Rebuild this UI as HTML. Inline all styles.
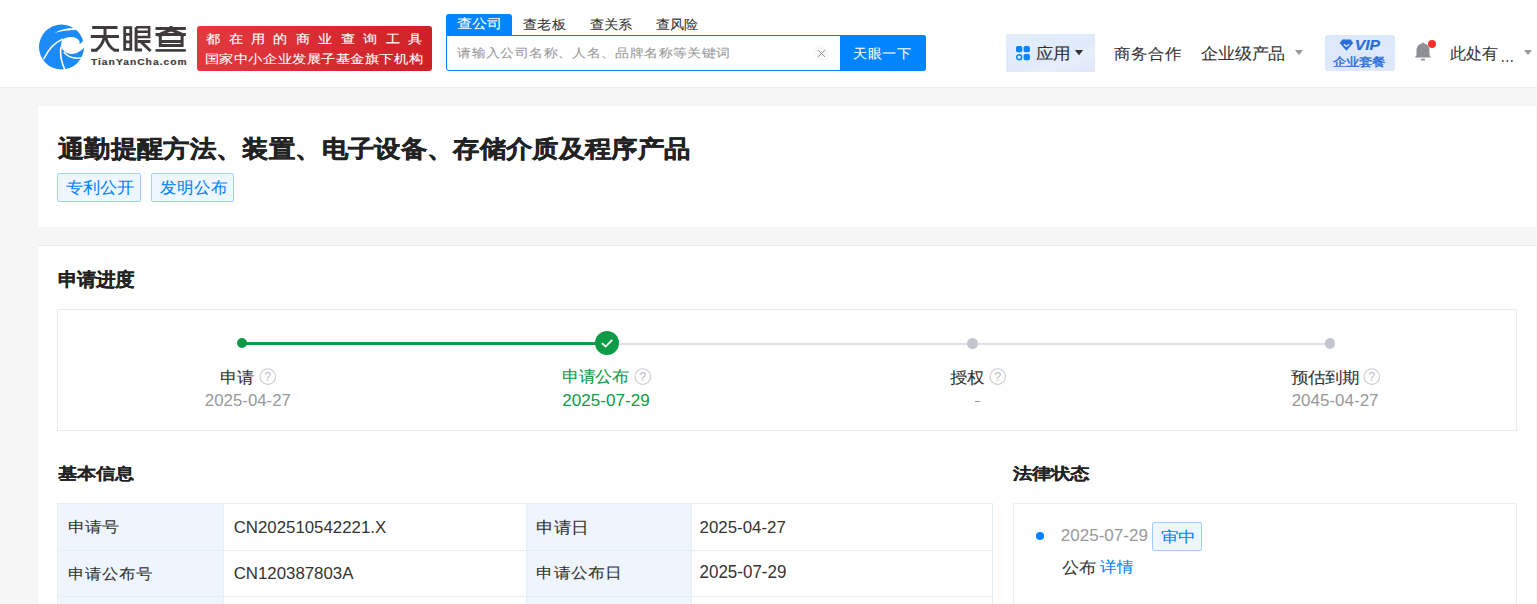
<!DOCTYPE html>
<html><head><meta charset="utf-8">
<style>
*{margin:0;padding:0;box-sizing:border-box}
html,body{width:1537px;height:604px;overflow:hidden;background:#f6f6f6;font-family:"Liberation Sans",sans-serif;color:#333}
.a{position:absolute;white-space:nowrap}
.r{position:absolute}
</style></head><body>
<!-- header -->
<div class="r" style="left:0;top:0;width:1537px;height:87px;background:#fff"></div>
<div class="r" style="left:0;top:87px;width:1537px;height:1px;background:#ebebeb"></div>
<svg class="r" style="left:36px;top:22px" width="50" height="50" viewBox="0 0 604 604">
  <circle cx="308" cy="302" r="272" fill="#1b8bf9"/>
  <path d="M305,300 C300,250 312,215 335,203 C400,170 495,175 525,232 C532,248 526,258 518,264 C545,262 565,240 578,205 L640,205 L640,300 L585,300 C545,362 470,392 418,386 C360,380 322,348 305,300 Z" fill="#fff"/>
  <path d="M222,132 C290,90 380,72 466,72 L482,96 C392,96 300,110 222,132 Z" fill="#fff"/>
  <path d="M92,448 C150,330 235,240 328,205" stroke="#fff" stroke-width="18" fill="none"/>
  <path d="M302,298 C288,380 302,480 352,585" stroke="#fff" stroke-width="20" fill="none"/>
  <path d="M335,362 C385,425 470,452 575,428" stroke="#fff" stroke-width="17" fill="none"/>
</svg>

<svg class="r" style="left:88px;top:22px" width="102" height="34" viewBox="88 22 102 34" fill="none" stroke="#3f3b3b" stroke-width="3">
  <path d="M92.2,27.6 H117.5 M90.8,36.5 H119 M105,27.6 V36.5"/>
  <path d="M104.2,37.5 C103,43 100,47.5 95.8,50.2 M91.1,50.2 H97.6"/>
  <path d="M105.8,37.5 C107,43 110,47.5 114.6,50.2 M113.8,50.2 H119"/>
  <path d="M124.7,27.6 H130.8 V49.4 H124.7 Z M124.7,34.4 H130.8 M124.7,41.9 H130.8" stroke-width="2.8"/>
  <path d="M136.1,27.2 V49.6 M134.8,50.1 H142"/>
  <path d="M136.1,27.2 H149.1 V37 H136.1 M136.1,31.8 H149.1" stroke-width="2.6"/>
  <path d="M137.5,41.5 H150.4"/>
  <path d="M141.2,42.2 L150.6,51"/>
  <path d="M155.5,28.6 H185.8 M155.5,34.4 H185.8 M171.05,25.9 V31.5"/>
  <path d="M170.2,30 L157.2,35.4 M171.9,30 L184.6,35.4"/>
  <path d="M160.3,35.8 V46.8 M182.1,35.8 V46.8 M160.3,41.4 H182.1 M158.8,45.5 H183.6"/>
  <path d="M155.5,50.4 H185.8" stroke-width="2.6"/>
</svg>
<div class="r" style="left:197px;top:26px;width:235px;height:45px;border-radius:3px;background:linear-gradient(100deg,#e2393f 0%,#d62a30 60%,#cf2026 100%)"></div>

<div class="r" style="left:446px;top:14px;width:66px;height:22px;background:#0084ff;border-radius:3px 3px 0 0"></div>
<div class="r" style="left:446px;top:35px;width:480px;height:36px;border:1px solid #0084ff;border-radius:0 3px 3px 3px;background:#fff"></div>
<div class="r" style="left:812.5px;top:44.5px;width:17px;height:17px;border-radius:50%;background:radial-gradient(circle,#f3f3f3 0%,#f7f7f7 50%,#fff 72%)"></div>
<svg class="r" style="left:817px;top:49px" width="9" height="9" viewBox="0 0 9 9"><path d="M1,1 L8,8 M8,1 L1,8" stroke="#8a8a8a" stroke-width="0.9"/></svg>
<div class="r" style="left:840px;top:35px;width:86px;height:36px;background:#0084ff;border-radius:0 3px 3px 0"></div>

<div class="r" style="left:1006px;top:34px;width:89px;height:38px;background:linear-gradient(160deg,#e3eefc 0%,#dfeafb 55%,#e8effb 70%,#dde8fa 100%)"></div>
<svg class="r" style="left:1015px;top:45px" width="16" height="16" viewBox="0 0 16 16">
  <rect x="1" y="1" width="6.3" height="6.3" rx="1.8" fill="#0084ff"/>
  <rect x="8.6" y="1" width="6.3" height="6.3" rx="1.8" fill="#0084ff"/>
  <circle cx="4.15" cy="12.3" r="2.45" fill="none" stroke="#0084ff" stroke-width="1.5"/>
  <rect x="8.6" y="8.9" width="6.3" height="6.3" rx="1.8" fill="#0084ff"/>
</svg>
<svg class="r" style="left:1074px;top:49px" width="10" height="7" viewBox="0 0 10 7"><path d="M0.8,1 L9.2,1 L5,6.2 Z" fill="#333"/></svg>
<svg class="r" style="left:1294px;top:49px" width="10" height="7" viewBox="0 0 10 7"><path d="M1,1 L9,1 L5,6.3 Z" fill="#999"/></svg>

<div class="r" style="left:1325px;top:35px;width:70px;height:36px;background:#dde8fb;border-radius:3px"></div>
<svg class="r" style="left:1339px;top:39px" width="15" height="13" viewBox="0 0 15 13">
  <path d="M3.4,0.4 L11.6,0.4 L14.2,3.9 L7.4,11.8 L0.7,3.9 Z" fill="#2a6dd6"/>
  <path d="M4.8,5.2 L7.4,7.4 L10.2,5.2" stroke="#dfe8fb" stroke-width="1.3" fill="none"/>
</svg>

<svg class="r" style="left:1414px;top:41px" width="20" height="21" viewBox="0 0 20 21">
  <path d="M9,1.6 C9.6,1.6 10,1.9 10,2.4 C13.6,3 15.5,5.8 15.5,9.5 L15.5,14.6 L16.6,15.4 L16.6,16.6 L1.4,16.6 L1.4,15.4 L2.5,14.6 L2.5,9.5 C2.5,5.8 4.4,3 8,2.4 C8,1.9 8.4,1.6 9,1.6 Z" fill="#8e9096"/>
  <rect x="7" y="17.8" width="4" height="1.6" rx="0.5" fill="#8e9096"/>
</svg>
<div class="r" style="left:1428px;top:39.5px;width:8px;height:8px;border-radius:50%;background:#f5312c"></div>
<svg class="r" style="left:1523px;top:49px" width="10" height="7" viewBox="0 0 10 7"><path d="M1,1 L9,1 L5,6 Z" fill="#999"/></svg>

<!-- title card -->
<div class="r" style="left:38px;top:106px;width:1498px;height:121px;background:#fff"></div>
<div class="r" style="left:57px;top:173px;width:84px;height:29px;border:1px solid #9fd0ff;background:#eef7ff;border-radius:2px"></div>
<div class="r" style="left:151px;top:173px;width:83px;height:29px;border:1px solid #9fd0ff;background:#eef7ff;border-radius:2px"></div>

<!-- main card -->
<div class="r" style="left:38px;top:245px;width:1498px;height:360px;background:#fff;border-top:1px solid #ededed"></div>
<div class="r" style="left:57px;top:309px;width:1460px;height:122px;border:1px solid #ebebeb"></div>
<!-- steps -->
<div class="r" style="left:242px;top:342px;width:365px;height:3px;background:#0f9a48"></div>
<div class="r" style="left:607px;top:342.5px;width:722px;height:2.5px;background:#dde0e8"></div>
<div class="r" style="left:237px;top:338px;width:10px;height:10px;border-radius:50%;background:#0f9a48"></div>
<div class="r" style="left:595px;top:331px;width:24px;height:24px;border-radius:50%;background:#0f9a48"></div>
<svg class="r" style="left:595px;top:331px" width="24" height="24" viewBox="0 0 24 24"><path d="M7,12.2 L10.6,15.6 L17.3,8.8" stroke="#fff" stroke-width="1.8" fill="none"/></svg>
<div class="r" style="left:967px;top:338px;width:10.5px;height:10.5px;border-radius:50%;background:#c3c6ce"></div>
<div class="r" style="left:1324.5px;top:338px;width:10.5px;height:10.5px;border-radius:50%;background:#c3c6ce"></div>
<!-- ? icons -->
<svg class="r" style="left:259px;top:368px" width="18" height="18" viewBox="0 0 18 18" id="q1"><circle cx="8.8" cy="8.6" r="7.8" fill="none" stroke="#c9ccd3" stroke-width="1.1"/><text x="8.8" y="13.2" font-size="12.5" text-anchor="middle" fill="#b9bcc3" font-family="Liberation Sans">?</text></svg>
<svg class="r" style="left:633.5px;top:368px" width="18" height="18" viewBox="0 0 18 18"><circle cx="8.8" cy="8.6" r="7.8" fill="none" stroke="#c9ccd3" stroke-width="1.1"/><text x="8.8" y="13.2" font-size="12.5" text-anchor="middle" fill="#b9bcc3" font-family="Liberation Sans">?</text></svg>
<svg class="r" style="left:988.5px;top:368px" width="18" height="18" viewBox="0 0 18 18"><circle cx="8.8" cy="8.6" r="7.8" fill="none" stroke="#c9ccd3" stroke-width="1.1"/><text x="8.8" y="13.2" font-size="12.5" text-anchor="middle" fill="#b9bcc3" font-family="Liberation Sans">?</text></svg>
<svg class="r" style="left:1363px;top:368px" width="18" height="18" viewBox="0 0 18 18"><circle cx="8.8" cy="8.6" r="7.8" fill="none" stroke="#c9ccd3" stroke-width="1.1"/><text x="8.8" y="13.2" font-size="12.5" text-anchor="middle" fill="#b9bcc3" font-family="Liberation Sans">?</text></svg>
<div class="r" style="left:975px;top:400.5px;width:5px;height:1.2px;background:#999"></div>

<!-- basic info table -->
<div class="r" style="left:57px;top:503px;width:936px;height:110px;border:1px solid #e5edf5;border-bottom:none"></div>
<div class="r" style="left:58px;top:504px;width:165.5px;height:110px;background:#eef5fc"></div>
<div class="r" style="left:526px;top:504px;width:165px;height:110px;background:#eef5fc"></div>
<div class="r" style="left:223px;top:504px;width:1px;height:110px;background:#e5edf5"></div>
<div class="r" style="left:526px;top:504px;width:1px;height:110px;background:#e5edf5"></div>
<div class="r" style="left:690.5px;top:504px;width:1px;height:110px;background:#e5edf5"></div>
<div class="r" style="left:58px;top:550px;width:934px;height:1px;background:#e5edf5"></div>
<div class="r" style="left:58px;top:596px;width:934px;height:1px;background:#e5edf5"></div>

<!-- legal -->
<div class="r" style="left:1013px;top:503px;width:504px;height:110px;border:1px solid #e8eef5;border-bottom:none"></div>
<div class="r" style="left:1035.8px;top:531.8px;width:8.6px;height:8.6px;border-radius:50%;background:#0084ff"></div>
<div class="r" style="left:1152px;top:522px;width:50px;height:28.5px;border:1px solid #9fd0ff;background:#eef7ff;border-radius:2px"></div>

<div class="a" style="left:90.90px;top:54.66px;font-size:10.259px;line-height:15.39px;color:#3f3b3b;letter-spacing:1.026px;-webkit-text-stroke:0.20px #3f3b3b;font-weight:bold;transform:scaleY(0.830);transform-origin:0 7.59px">TianYanCha.com</div>
<div class="a" style="left:206.16px;top:28.67px;font-size:14.376px;line-height:21.56px;color:#fff;letter-spacing:8.427px;-webkit-text-stroke:0.15px #fff;transform:scaleY(0.849);transform-origin:0 10.93px">都在用的商业查询工具</div>
<div class="a" style="left:204.84px;top:48.98px;font-size:14.555px;line-height:21.83px;color:#fff;letter-spacing:-0.445px;-webkit-text-stroke:0.08px #fff;transform:scaleY(0.838);transform-origin:0 10.92px">国家中小企业发展子基金旗下机构</div>
<div class="a" style="left:457.00px;top:12.90px;font-size:15.196px;line-height:22.79px;color:#fff;letter-spacing:0.196px;-webkit-text-stroke:0.08px #fff;transform:scaleY(0.857);transform-origin:0 11.55px">查公司</div>
<div class="a" style="left:523.11px;top:13.59px;font-size:14.388px;line-height:21.58px;color:#333;letter-spacing:0.388px;-webkit-text-stroke:0.08px #333;transform:scaleY(0.915);transform-origin:0 10.86px">查老板</div>
<div class="a" style="left:589.51px;top:13.83px;font-size:14.257px;line-height:21.39px;color:#333;letter-spacing:0.257px;-webkit-text-stroke:0.08px #333;transform:scaleY(0.904);transform-origin:0 10.62px">查关系</div>
<div class="a" style="left:655.61px;top:13.64px;font-size:14.320px;line-height:21.48px;color:#333;letter-spacing:0.320px;-webkit-text-stroke:0.08px #333;transform:scaleY(0.919);transform-origin:0 10.81px">查风险</div>
<div class="a" style="left:457.16px;top:42.78px;font-size:14.394px;line-height:21.59px;color:#999;letter-spacing:0.394px;-webkit-text-stroke:0.08px #999;transform:scaleY(0.863);transform-origin:0 10.87px">请输入公司名称、人名、品牌名称等关键词</div>
<div class="a" style="left:853.42px;top:42.60px;font-size:14.541px;line-height:21.81px;color:#fff;letter-spacing:-0.459px;-webkit-text-stroke:0.08px #fff;transform:scaleY(0.919);transform-origin:0 11.05px">天眼一下</div>
<div class="a" style="left:1036.05px;top:41.02px;font-size:17.273px;line-height:25.91px;color:#333;letter-spacing:0.273px;-webkit-text-stroke:0.08px #333;transform:scaleY(0.905);transform-origin:0 12.78px">应用</div>
<div class="a" style="left:1114.46px;top:41.21px;font-size:16.785px;line-height:25.18px;color:#333;letter-spacing:-0.215px;-webkit-text-stroke:0.08px #333;transform:scaleY(0.912);transform-origin:0 12.59px">商务合作</div>
<div class="a" style="left:1200.56px;top:41.08px;font-size:16.986px;line-height:25.48px;color:#333;letter-spacing:-0.014px;-webkit-text-stroke:0.08px #333;transform:scaleY(0.938);transform-origin:0 12.57px">企业级产品</div>
<div class="a" style="left:1333.24px;top:51.86px;font-size:13.028px;line-height:19.54px;color:#2a6dd6;letter-spacing:0.028px;-webkit-text-stroke:0.40px #2a6dd6;transform:scaleY(0.889);transform-origin:0 9.84px">企业套餐</div>
<div class="a" style="left:1354.75px;top:33.68px;font-size:15.686px;line-height:23.53px;color:#2a6dd6;-webkit-text-stroke:0.20px #2a6dd6;font-weight:bold;font-style:italic;transform:scaleY(0.874);transform-origin:0 11.92px">VIP</div>
<div class="a" style="left:1450.34px;top:42.37px;font-size:15.932px;line-height:23.90px;color:#333;letter-spacing:-0.068px;-webkit-text-stroke:0.08px #333">此处有</div>
<div class="a" style="left:1500.55px;top:43.82px;font-size:16.154px;line-height:24.23px;color:#555;transform:scaleY(1.126);transform-origin:0 16.88px">...</div>
<div class="a" style="left:57.94px;top:129.53px;font-size:26.360px;line-height:39.54px;color:#222;letter-spacing:0.360px;-webkit-text-stroke:0.45px #222;font-weight:bold;transform:scaleY(0.912);transform-origin:0 19.77px">通勤提醒方法、装置、电子设备、存储介质及程序产品</div>
<div class="a" style="left:65.86px;top:174.91px;font-size:16.954px;line-height:25.43px;color:#0084ff;letter-spacing:-0.046px;-webkit-text-stroke:0.08px #0084ff;transform:scaleY(0.927);transform-origin:0 12.89px">专利公开</div>
<div class="a" style="left:160.03px;top:174.78px;font-size:16.911px;line-height:25.37px;color:#0084ff;letter-spacing:-0.089px;-webkit-text-stroke:0.08px #0084ff;transform:scaleY(0.969);transform-origin:0 13.02px">发明公布</div>
<div class="a" style="left:57.83px;top:265.69px;font-size:19.135px;line-height:28.70px;color:#222;letter-spacing:0.135px;-webkit-text-stroke:0.12px #222;font-weight:bold;transform:scaleY(0.968);transform-origin:0 14.06px">申请进度</div>
<div class="a" style="left:220.48px;top:364.81px;font-size:17.000px;line-height:25.50px;color:#333;-webkit-text-stroke:0.08px #333;transform:scaleY(0.923);transform-origin:0 12.84px">申请</div>
<div class="a" style="left:204.86px;top:388.09px;font-size:16.833px;line-height:25.25px;color:#999;transform:scaleY(0.971);transform-origin:0 12.71px">2025-04-27</div>
<div class="a" style="left:561.90px;top:365.00px;font-size:16.641px;line-height:24.96px;color:#0f9a48;letter-spacing:-0.359px;-webkit-text-stroke:0.08px #0f9a48;transform:scaleY(0.933);transform-origin:0 12.65px">申请公布</div>
<div class="a" style="left:562.35px;top:387.91px;font-size:17.072px;line-height:25.61px;color:#0f9a48;transform:scaleY(0.957);transform-origin:0 12.89px">2025-07-29</div>
<div class="a" style="left:950.03px;top:364.54px;font-size:17.143px;line-height:25.71px;color:#333;letter-spacing:0.143px;-webkit-text-stroke:0.08px #333;transform:scaleY(0.915);transform-origin:0 13.11px">授权</div>
<div class="a" style="left:1291.13px;top:364.69px;font-size:17.059px;line-height:25.59px;color:#333;letter-spacing:0.059px;-webkit-text-stroke:0.08px #333;transform:scaleY(0.910);transform-origin:0 12.96px">预估到期</div>
<div class="a" style="left:1291.65px;top:387.97px;font-size:16.992px;line-height:25.49px;color:#999;transform:scaleY(0.962);transform-origin:0 12.83px">2045-04-27</div>
<div class="a" style="left:57.90px;top:460.11px;font-size:18.922px;line-height:28.38px;color:#222;letter-spacing:-0.078px;-webkit-text-stroke:0.12px #222;font-weight:bold;transform:scaleY(0.833);transform-origin:0 14.29px">基本信息</div>
<div class="a" style="left:68.18px;top:515.14px;font-size:16.966px;line-height:25.45px;color:#333;letter-spacing:-0.034px;-webkit-text-stroke:0.08px #333;transform:scaleY(0.875);transform-origin:0 12.81px">申请号</div>
<div class="a" style="left:233.66px;top:515.04px;font-size:16.841px;line-height:25.26px;color:#333">CN202510542221.X</div>
<div class="a" style="left:536.36px;top:514.55px;font-size:17.355px;line-height:26.03px;color:#333;letter-spacing:0.355px;-webkit-text-stroke:0.08px #333;transform:scaleY(0.904);transform-origin:0 13.10px">申请日</div>
<div class="a" style="left:699.56px;top:514.81px;font-size:16.873px;line-height:25.31px;color:#333;transform:scaleY(1.027);transform-origin:0 12.74px">2025-04-27</div>
<div class="a" style="left:68.19px;top:560.95px;font-size:16.837px;line-height:25.26px;color:#333;letter-spacing:-0.163px;-webkit-text-stroke:0.08px #333;transform:scaleY(0.909);transform-origin:0 12.80px">申请公布号</div>
<div class="a" style="left:233.66px;top:560.63px;font-size:16.841px;line-height:25.26px;color:#333">CN120387803A</div>
<div class="a" style="left:536.37px;top:560.69px;font-size:17.185px;line-height:25.78px;color:#333;letter-spacing:0.185px;-webkit-text-stroke:0.08px #333;transform:scaleY(0.891);transform-origin:0 13.06px">申请公布日</div>
<div class="a" style="left:699.55px;top:560.44px;font-size:16.972px;line-height:25.46px;color:#333;transform:scaleY(1.037);transform-origin:0 12.81px">2025-07-29</div>
<div class="a" style="left:1012.99px;top:460.05px;font-size:19.000px;line-height:28.50px;color:#222;-webkit-text-stroke:0.12px #222;font-weight:bold;transform:scaleY(0.821);transform-origin:0 14.25px">法律状态</div>
<div class="a" style="left:1060.85px;top:523.39px;font-size:17.032px;line-height:25.55px;color:#999">2025-07-29</div>
<div class="a" style="left:1160.80px;top:523.86px;font-size:17.541px;line-height:26.31px;color:#0084ff;letter-spacing:-0.459px;-webkit-text-stroke:0.08px #0084ff;transform:scaleY(0.852);transform-origin:0 12.89px">审中</div>
<div class="a" style="left:1061.83px;top:554.67px;font-size:16.923px;line-height:25.38px;color:#333;letter-spacing:-0.077px;-webkit-text-stroke:0.08px #333;transform:scaleY(0.930);transform-origin:0 13.03px">公布</div>
<div class="a" style="left:1100.43px;top:555.12px;font-size:16.888px;line-height:25.33px;color:#0084ff;letter-spacing:-0.112px;-webkit-text-stroke:0.08px #0084ff;transform:scaleY(0.903);transform-origin:0 12.58px">详情</div>
</body></html>
